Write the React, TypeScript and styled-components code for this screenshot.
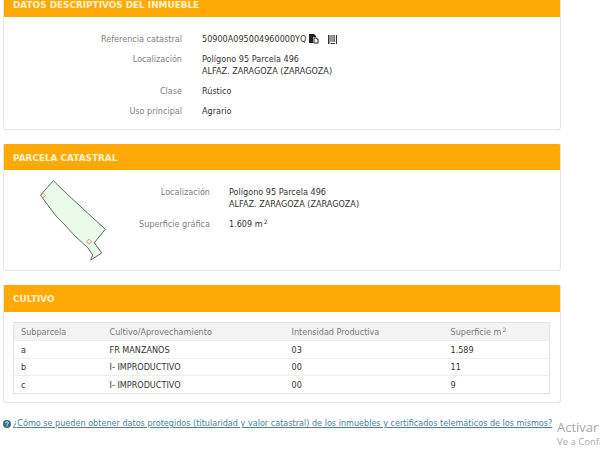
import styled, { createGlobalStyle } from 'styled-components'

const GlobalStyle = createGlobalStyle`
  html, body {
    margin: 0;
    padding: 0;
    height: 450px;
    overflow: hidden;
    background: #fff;
    font-family: "DejaVu Sans", Verdana, sans-serif;
    font-size: 8.1px;
    color: #333;
  }
`
const Page = styled.div`
  position: relative;
  width: 600px;
  height: 450px;
  overflow: hidden;
  padding: 0 0 0 3px;
  box-sizing: border-box;
`
const Panel = styled.section<{ $height: number; $gap?: number }>`
  width: 558px;
  height: ${({ $height }) => $height}px;
  margin-bottom: ${({ $gap }) => $gap ?? 14}px;
  box-sizing: border-box;
  border: 1px solid #e6e6e6;
  border-top: 0;
  border-radius: 0 0 3px 3px;
  overflow: hidden;
`
const Heading = styled.h2<{ $height: number; $clipped?: boolean }>`
  display: flex;
  align-items: ${({ $clipped }) => ($clipped ? 'flex-end' : 'center')};
  height: ${({ $height }) => $height}px;
  margin: 0 -1px;
  padding: ${({ $clipped }) => ($clipped ? '0 10px 7px' : '1px 10px 0')};
  box-sizing: border-box;
  background: #ffa906;
  border-radius: ${({ $clipped }) => ($clipped ? '0' : '3px 3px 0 0')};
  font-size: 8.9px;
  line-height: 10px;
  font-weight: 700;
  color: #fff3cf;
`
const Rows = styled.dl<{ $label: number; $gap: number; $top: number }>`
  display: grid;
  grid-template-columns: ${({ $label }) => $label}px 1fr;
  column-gap: ${({ $gap }) => $gap}px;
  row-gap: 8px;
  margin: 0;
  padding-top: ${({ $top }) => $top}px;
  line-height: 12px;
`
const Label = styled.dt`
  text-align: right;
  color: #808080;
`
const Value = styled.dd`
  margin: 0;
  color: #333;
`
const RefLine = styled.div`
  display: flex;
  align-items: center;
`
const Sup = styled.sup`
  font-size: 6px;
  line-height: 0;
  margin-left: 1px;
  vertical-align: 3px;
`
const RefIcons = styled.span`
  display: inline-flex;
  align-items: center;
  gap: 9px;
  margin-left: 3px;
`
const ParcelBody = styled.div`
  display: flex;
`
const ParcelMap = styled.svg`
  flex: none;
  width: 80px;
  height: 95px;
  margin: 7px 0 0 28px;
`
const ParcelInfo = styled.div`
  flex: 1;
`
const TableWrap = styled.div`
  padding: 10px 9px 0;
`
const Table = styled.table`
  width: 536px;
  table-layout: fixed;
  border-collapse: collapse;
  border: 1px solid #e2e2e2;
  th {
    box-sizing: border-box;
    height: 18px;
    padding: 1px 0 0 7px;
    background: #f3f3f3;
    font-weight: 400;
    text-align: left;
    color: #777;
  }
  td {
    box-sizing: border-box;
    height: 17.5px;
    padding: 1px 0 0 7px;
    border-top: 1px solid #eee;
    color: #333;
  }
`
const HelpLine = styled.p`
  display: flex;
  align-items: center;
  gap: 2px;
  margin: 0;
  padding-top: 14px;
  line-height: 13px;
  white-space: nowrap;
`
const HelpLink = styled.a`
  color: #4c7f92;
  text-decoration: underline;
`
const Watermark = styled.div`
  position: absolute;
  left: 557px;
  top: 419px;
  color: #a8a8a8;
  white-space: nowrap;
`
const WatermarkTitle = styled.div`
  font-family: "Open Sans", sans-serif;
  font-size: 13px;
  line-height: 17px;
`
const WatermarkText = styled.div`
  font-family: "Open Sans", sans-serif;
  font-size: 9.5px;
  line-height: 12px;
`
const HelpGlyph = styled.svg`
  flex: none;
`

const CopyIcon = () => (
  <svg width="10" height="10" viewBox="0 0 10 10">
    <path d="M0 0h5l2 2v1H4v6H0z" fill="#222" />
    <path d="M4.5 3.5h3l2 2v4h-5z" fill="#222" />
    <path d="M5.5 8.5v-4h1.6l1.4 1.4v2.6z" fill="#fff" />
  </svg>
)

const BarcodeIcon = () => (
  <svg width="9" height="9" viewBox="0 0 9 9">
    <path d="M0 0h1.5v9H0zM2.5 0h1v7h-1zM4.5 0h1v7h-1zM6.3 0h.8v7h-.8zM8 0h1v9H8zM2.5 8h4.6v1H2.5z" fill="#333" />
  </svg>
)

const HelpIcon = () => (
  <HelpGlyph width="8" height="8" viewBox="0 0 8 8">
    <circle cx="4" cy="4" r="4" fill="#2f6f86" />
    <path d="M2.7 3.1c0-1.7 2.7-1.7 2.7-.2 0 1-1.3.9-1.3 1.9" fill="none" stroke="#fff" strokeWidth="1" />
    <rect x="3.6" y="5.4" width="1" height="1" fill="#fff" />
  </HelpGlyph>
)

const crops = [
  ['a', 'FR MANZANOS', '03', '1.589'],
  ['b', 'I- IMPRODUCTIVO', '00', '11'],
  ['c', 'I- IMPRODUCTIVO', '00', '9'],
]

const App = () => (
  <Page>
    <GlobalStyle />
    <Panel $height={130}>
      <Heading $height={17} $clipped>DATOS DESCRIPTIVOS DEL INMUEBLE</Heading>
      <Rows $label={178} $gap={20} $top={16}>
        <Label>Referencia catastral</Label>
        <Value>
          <RefLine>
            50900A095004960000YQ
            <RefIcons>
              <CopyIcon />
              <BarcodeIcon />
            </RefIcons>
          </RefLine>
        </Value>
        <Label>Localización</Label>
        <Value>
          Polígono 95 Parcela 496
          <br />
          ALFAZ. ZARAGOZA (ZARAGOZA)
        </Value>
        <Label>Clase</Label>
        <Value>Rústico</Value>
        <Label>Uso principal</Label>
        <Value>Agrario</Value>
      </Rows>
    </Panel>

    <Panel $height={127} $gap={14}>
      <Heading $height={26}>PARCELA CATASTRAL</Heading>
      <ParcelBody>
        <ParcelMap viewBox="32 177 80 95">
          <path
            d="M53.3 180.7L40.7 195L44 200L50 208L56 216L63 223L75 236L88 248L92.7 255L90.7 260L101.7 253L94.3 242.7L105.3 229.3L80 206L66 193z"
            fill="#e9fbe9"
            stroke="#666"
            strokeWidth="1"
          />
          <rect x="41" y="194" width="3.6" height="3.6" transform="rotate(45 43 196)" fill="none" stroke="#d9826a" strokeWidth="0.8" />
          <rect x="87" y="240" width="3.6" height="3.6" transform="rotate(45 89 242)" fill="none" stroke="#d9826a" strokeWidth="0.8" />
        </ParcelMap>
        <ParcelInfo>
          <Rows $label={98} $gap={19} $top={16}>
            <Label>Localización</Label>
            <Value>
              Polígono 95 Parcela 496
              <br />
              ALFAZ. ZARAGOZA (ZARAGOZA)
            </Value>
            <Label>Superficie gráfica</Label>
            <Value>
              1.609 m<Sup>2</Sup>
            </Value>
          </Rows>
        </ParcelInfo>
      </ParcelBody>
    </Panel>

    <Panel $height={118} $gap={0}>
      <Heading $height={27}>CULTIVO</Heading>
      <TableWrap>
        <Table>
          <colgroup>
            <col width="89" />
            <col width="182" />
            <col width="159" />
            <col width="106" />
          </colgroup>
          <thead>
            <tr>
              <th>Subparcela</th>
              <th>Cultivo/Aprovechamiento</th>
              <th>Intensidad Productiva</th>
              <th>
                Superficie m<Sup>2</Sup>
              </th>
            </tr>
          </thead>
          <tbody>
            {crops.map(row => (
              <tr key={row[0]}>
                {row.map((cell, i) => (
                  <td key={i}>{cell}</td>
                ))}
              </tr>
            ))}
          </tbody>
        </Table>
      </TableWrap>
    </Panel>

    <HelpLine>
      <HelpIcon />
      <HelpLink href="#">
        ¿Cómo se pueden obtener datos protegidos (titularidad y valor catastral) de los inmuebles y certificados telemáticos de los mismos?
      </HelpLink>
    </HelpLine>

    <Watermark>
      <WatermarkTitle>Activar</WatermarkTitle>
      <WatermarkText>Ve a Confi</WatermarkText>
    </Watermark>
  </Page>
)

export default App
